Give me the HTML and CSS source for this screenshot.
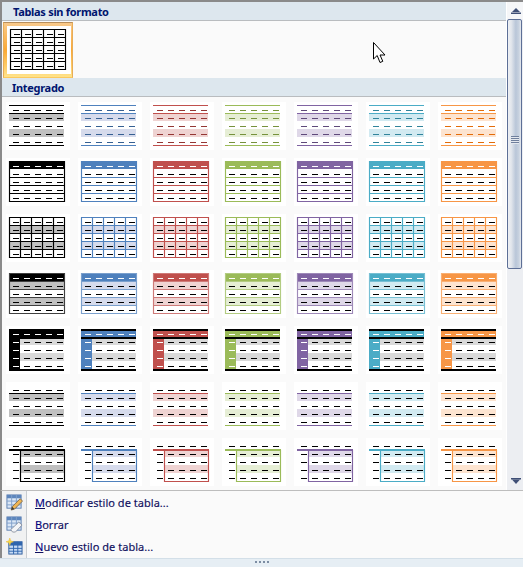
FILE: index.html
```html
<!DOCTYPE html>
<html lang="es">
<head>
<meta charset="utf-8">
<title>Estilos de tabla</title>
<link rel="stylesheet" href="styles.css">
</head>
<body>
<svg class="defs" xmlns="http://www.w3.org/2000/svg">
  <path id="dr" d="M7 .5h6M18 .5h6M29 .5h6M40 .5h6M51 .5h6"/>
  <path id="dr4" d="M18 .5h6M29 .5h6M40 .5h6M51 .5h6"/>
  <g id="r-body"><use href="#dr" y="16"/><use href="#dr" y="24"/><use href="#dr" y="32"/><use href="#dr" y="40"/></g>
  <g id="r-right"><use href="#dr4" y="16"/><use href="#dr4" y="24"/><use href="#dr4" y="32"/><use href="#dr4" y="40"/></g>
  <path id="r-left" d="M7 16.5h6M7 24.5h6M7 32.5h6M7 40.5h6"/>
  <symbol id="s1" viewBox="0 0 64 48">
    <path class="band" d="M3 11h55v8H3zM3 27h55v8H3z"/>
    <path class="ln" d="M3 3.500h55M3 11.500h55M3 43.500h55"/>
    <use class="dk" href="#dr" y="8"/><use class="dk" href="#r-body"/>
  </symbol>
  <symbol id="s2" viewBox="0 0 64 48">
    <rect class="fillc" x="3" y="3" width="56" height="8"/>
    <path class="ln" d="M3.500 3.500h55v40h-55zM3 19.500h55M3 27.500h55M3 35.500h55"/>
    <use class="wh" href="#dr" y="8"/><use class="bk" href="#r-body"/>
  </symbol>
  <symbol id="s3" viewBox="0 0 64 48">
    <path class="band" d="M3 11h55v8H3zM3 27h55v8H3z"/>
    <path class="ln" d="M3.500 3.500h55v40h-55zM3 11.500h55M3 19.500h55M3 27.500h55M3 35.500h55M14.500 3v40M25.500 3v40M36.500 3v40M47.500 3v40"/>
    <use class="bk" href="#dr" y="8"/><use class="bk" href="#r-body"/>
  </symbol>
  <symbol id="s4" viewBox="0 0 64 48">
    <path class="band" d="M3 11h55v8H3zM3 27h55v8H3z"/>
    <rect class="fillc" x="3" y="3" width="56" height="8"/>
    <path class="med" d="M3.500 3.500h55v40h-55zM3 11.500h55M3 19.500h55M3 27.500h55M3 35.500h55"/>
    <use class="wh" href="#dr" y="8"/><use class="bk" href="#r-body"/>
  </symbol>
  <symbol id="s5" viewBox="0 0 64 48">
    <path class="grey" d="M14 13h44v6H14zM14 27h44v8H14z"/>
    <path class="fillc" d="M3 5h55v6H3zM3 13h11v30H3z"/>
    <path class="blk" d="M3 3h55v2H3zM3 11h55v2H3zM3 43h55v2H3z"/>
    <use class="wh" href="#dr" y="8"/><use class="wh" href="#r-left"/><use class="bk" href="#r-right"/>
  </symbol>
  <symbol id="s6" viewBox="0 0 64 48">
    <path class="band" d="M3 11h55v8H3zM3 27h55v8H3z"/>
    <path class="ln" d="M3 11.500h55M3 43.500h55"/>
    <use class="bk" href="#dr" y="8"/><use class="bk" href="#r-body"/>
  </symbol>
  <symbol id="s7" viewBox="0 0 64 48">
    <path class="band" d="M15 13h43v6H15zM15 27h43v8H15z"/>
    <path class="ln" d="M14.500 12v31.500h44V12"/>
    <rect class="fillc" x="3" y="11" width="56" height="2"/>
    <use class="bk" href="#dr" y="8"/><use class="bk" href="#r-body"/>
  </symbol>
</svg>

<div class="app">
  <div class="main">
    <div class="list">
      <h2 class="sec">Tablas sin formato</h2>
      <div class="plain-row">
        <div class="selected"><svg class="thumb plain"><use href="#s3"/></svg></div>
      </div>
      <h2 class="sec sec-b">Integrado</h2>
      <div class="gallery">
        <svg class="thumb black"><use href="#s1"/></svg><svg class="thumb blue"><use href="#s1"/></svg><svg class="thumb red"><use href="#s1"/></svg><svg class="thumb green"><use href="#s1"/></svg><svg class="thumb purple"><use href="#s1"/></svg><svg class="thumb aqua"><use href="#s1"/></svg><svg class="thumb orange"><use href="#s1"/></svg>
        <svg class="thumb black"><use href="#s2"/></svg><svg class="thumb blue"><use href="#s2"/></svg><svg class="thumb red"><use href="#s2"/></svg><svg class="thumb green"><use href="#s2"/></svg><svg class="thumb purple"><use href="#s2"/></svg><svg class="thumb aqua"><use href="#s2"/></svg><svg class="thumb orange"><use href="#s2"/></svg>
        <svg class="thumb black"><use href="#s3"/></svg><svg class="thumb blue"><use href="#s3"/></svg><svg class="thumb red"><use href="#s3"/></svg><svg class="thumb green"><use href="#s3"/></svg><svg class="thumb purple"><use href="#s3"/></svg><svg class="thumb aqua"><use href="#s3"/></svg><svg class="thumb orange"><use href="#s3"/></svg>
        <svg class="thumb black"><use href="#s4"/></svg><svg class="thumb blue"><use href="#s4"/></svg><svg class="thumb red"><use href="#s4"/></svg><svg class="thumb green"><use href="#s4"/></svg><svg class="thumb purple"><use href="#s4"/></svg><svg class="thumb aqua"><use href="#s4"/></svg><svg class="thumb orange"><use href="#s4"/></svg>
        <svg class="thumb black"><use href="#s5"/></svg><svg class="thumb blue"><use href="#s5"/></svg><svg class="thumb red"><use href="#s5"/></svg><svg class="thumb green"><use href="#s5"/></svg><svg class="thumb purple"><use href="#s5"/></svg><svg class="thumb aqua"><use href="#s5"/></svg><svg class="thumb orange"><use href="#s5"/></svg>
        <svg class="thumb black"><use href="#s6"/></svg><svg class="thumb blue"><use href="#s6"/></svg><svg class="thumb red"><use href="#s6"/></svg><svg class="thumb green"><use href="#s6"/></svg><svg class="thumb purple"><use href="#s6"/></svg><svg class="thumb aqua"><use href="#s6"/></svg><svg class="thumb orange"><use href="#s6"/></svg>
        <svg class="thumb black"><use href="#s7"/></svg><svg class="thumb blue"><use href="#s7"/></svg><svg class="thumb red"><use href="#s7"/></svg><svg class="thumb green"><use href="#s7"/></svg><svg class="thumb purple"><use href="#s7"/></svg><svg class="thumb aqua"><use href="#s7"/></svg><svg class="thumb orange"><use href="#s7"/></svg>
      </div>
    </div>
    <div class="scrollbar">
      <div class="arrow-box"><svg class="arrow" viewBox="0 0 10 6"><path d="M5 0l4 4H1z"/><path d="M0 4.500h10v1.500H0z"/></svg></div>
      <div class="sb-thumb">
        <div class="grip"></div>
      </div>
      <div class="sb-track"></div>
      <div class="arrow-box arrow-down"><svg class="arrow" viewBox="0 0 10 6"><path d="M0 0h10v1.500H0z"/><path d="M1 1.500h8l-4 4.500z"/></svg></div>
    </div>
  </div>
  <div class="menu">
    <div class="menu-item">
      <svg class="icon" viewBox="0 0 18 18">
        <rect x="1" y="1" width="15" height="14" fill="#dbe7f6" stroke="#5d7fb0"/>
        <rect x="1" y="1" width="15" height="3.500" fill="#5d86bd"/>
        <path d="M6 1v14M11 1v14M1 7.500h15M1 11.500h15" stroke="#7f9fca" fill="none"/>
        <path d="M15 5l2.500 2.500L9 16l-3.500 1L6.500 13.500z" fill="#f0b552" stroke="#6e5a3a" stroke-width=".8"/>
        <path d="M6.500 13.500L5.500 17L9 16z" fill="#3a3a3a"/>
      </svg>
      <span class="label"><u>M</u>odificar estilo de tabla...</span>
    </div>
    <div class="menu-item">
      <svg class="icon" viewBox="0 0 18 18">
        <rect x="1" y="1" width="15" height="14" fill="#dbe7f6" stroke="#5d7fb0"/>
        <rect x="1" y="1" width="15" height="3.500" fill="#5d86bd"/>
        <path d="M6 1v14M11 1v14M1 7.500h15M1 11.500h15" stroke="#7f9fca" fill="none"/>
        <path d="M13.500 6.500l3.500 3L10 17H7l-2-2.500z" fill="#f4f5f8" stroke="#7d8594" stroke-width=".8"/>
      </svg>
      <span class="label"><u>B</u>orrar</span>
    </div>
    <div class="menu-item">
      <svg class="icon" viewBox="0 0 18 18">
        <rect x="3" y="4" width="14" height="13" fill="#c7dcf5" stroke="#2f5f9e"/>
        <rect x="3" y="4" width="14" height="4" fill="#2f65ad"/>
        <path d="M8 4v13M12.500 4v13M3 11h14M3 14h14" stroke="#2f65ad" fill="none"/>
        <path d="M4 0l1 3 3 1-3 1-1 3-1-3-3-1 3-1z" fill="#f6d84a" stroke="#e9b93a" stroke-width=".5"/>
      </svg>
      <span class="label"><u>N</u>uevo estilo de tabla...</span>
    </div>
  </div>
  <div class="footer"><span class="dots"><i></i><i></i><i></i><i></i></span></div>
  <svg class="cursor" viewBox="0 0 13 22"><path d="M.5.500v16.500l3.700-3.500 2.800 7 2.800-1.200-2.800-6.300h5z" fill="#fff" stroke="#000"/></svg>
</div>
</body>
</html>
```
FILE: styles.css
```css
* { box-sizing: border-box; }
html, body { margin: 0; padding: 0; }
body { width: 523px; height: 567px; overflow: hidden; background: #fafafa; font-family: "Noto Sans", "Liberation Sans", sans-serif; }
.defs { display: none; }

.app { position: relative; width: 523px; height: 567px; display: flex; flex-direction: column; border-top: 2px solid #8a8a8a; background: #fafafa; }
.main { display: flex; height: 488px; }
.list { width: 506px; border-left: 2px solid #8a8a8a; display: flex; flex-direction: column; }

.sec { margin: 0; height: 19px; padding-left: 11px; background: #dde7ee; border-bottom: 1px solid #b9bcbf; color: #00156e; font-size: 11px; line-height: 20px; font-weight: 700; letter-spacing: -.3px; }
.sec-b { padding-left: 10px; }
.plain-row { height: 57px; padding: 1px 0 0 1px; }
.selected { width: 70px; height: 56px; padding: 3px; border: 1px solid #b98f5c; border-bottom-color: #fbc95e; border-left-color: #e8ad58; border-right-color: #e8ad58; background: linear-gradient(#f9c98a, #fba935 50%, #ffe38a); }
.gallery { display: grid; grid-template-columns: repeat(7, 64px); grid-auto-rows: 48px; gap: 8px; padding: 5px 0 0 4px; }

.thumb { display: block; width: 64px; height: 48px; background: #fff; --c: #000; --l: #000; --d: #000; --b: #c0c0c0; --m: #404040; }
.plain { --b: transparent; }
.blue { --c: #4f81bd; --l: #4f81bd; --d: #366092; --b: #d6dbec; --m: #7ba0cd; }
.red { --c: #c0504d; --l: #c0504d; --d: #943634; --b: #efd3d2; --m: #cf7b79; }
.green { --c: #9bbb59; --l: #9bbb59; --d: #76923c; --b: #e6eed5; --m: #b3cc82; }
.purple { --c: #8064a2; --l: #8064a2; --d: #5f497a; --b: #dfd8e8; --m: #9f8ab9; }
.aqua { --c: #4bacc6; --l: #4bacc6; --d: #31849b; --b: #d2eaf1; --m: #78c0d4; }
.orange { --c: #f79646; --l: #f79646; --d: #e36c0a; --b: #fde4d0; --m: #f9b074; }

.band { fill: var(--b); }
.grey { fill: #d9d9d9; }
.blk { fill: #000; }
.fillc { fill: var(--c); }
.ln { fill: none; stroke: var(--l); stroke-width: 1.15; }
.med { fill: none; stroke: var(--m); stroke-width: 1.15; }
.dk { fill: none; stroke: var(--d); shape-rendering: crispEdges; }
.wh { fill: none; stroke: #fff; shape-rendering: crispEdges; }
.bk { fill: none; stroke: #000; shape-rendering: crispEdges; }

.scrollbar { width: 17px; display: flex; flex-direction: column; background: #eceef2; border-left: 1px solid #fff; }
.arrow-box { height: 17px; display: flex; align-items: center; justify-content: center; padding-left: 1px; background: #f5f6f8; }
.arrow-down { height: 19px; background: #eceef2; }
.arrow { width: 10px; height: 6px; fill: #3f4f76; display: block; }
.sb-thumb { height: 250px; margin-right: 1px; border: 1px solid #5d6f96; border-radius: 2px; background: linear-gradient(90deg, #eef0f4, #e2e6ec 25%, #b9c6d8 60%, #c9d3e0 85%, #e6e9ef); display: flex; align-items: center; justify-content: center; }
.grip { width: 8px; height: 8px; background: repeating-linear-gradient(#6f7f9c 0 1px, #e4e8ee 1px 2px); position: relative; top: -4px; }
.sb-track { flex: 1; }

.menu { height: 68px; border-top: 1px solid #bdbdbd; border-left: 2px solid #8a8a8a; background: linear-gradient(90deg, #f0f1f2 0 24px, #c8ccd0 24px 25px, #fafafa 25px); }
.menu-item { height: 22px; display: flex; align-items: center; padding-left: 4px; gap: 12px; }
.icon { width: 17px; height: 17px; flex: none; }
.label { color: #10105e; font-size: 11px; letter-spacing: .03px; -webkit-text-stroke: .15px #10105e; }
.label u { color: #00008a; }

.footer { height: 9px; border-top: 1px solid #d3dfe8; background: #e6eef4; display: flex; justify-content: center; }
.dots { display: flex; gap: 2px; margin-top: 2px; height: 2px; }
.dots i { width: 2px; height: 2px; background: #7c8da3; display: block; }

.cursor { position: absolute; left: 373px; top: 40px; width: 13px; height: 22px; }
```
